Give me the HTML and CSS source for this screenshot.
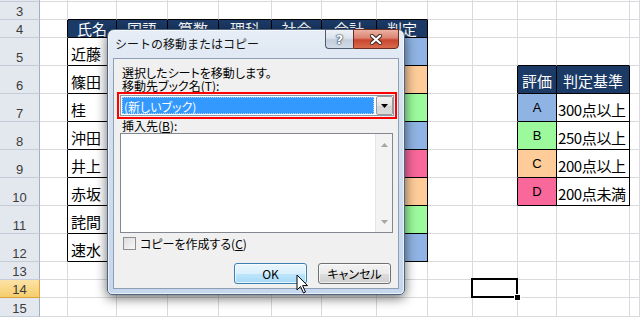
FILE: index.html
```html
<!DOCTYPE html>
<html lang="ja">
<head>
    <meta charset="UTF-8">
    <title>シートの移動またはコピー</title>

    <link rel="stylesheet" href="styles.css">
</head>
<body>

    <div class="screen">

        <div class="sheet">
            <!-- row 2 (only its bottom edge shows) -->
            <div class="rh"></div><div class="c"></div><div class="c"></div><div class="c"></div><div class="c"></div><div class="c"></div><div class="c"></div><div class="c"></div><div class="c"></div><div class="c"></div><div class="c"></div><div class="c"></div><div class="c"></div><div class="c"></div>
            <!-- row 3 -->
            <div class="rh">3</div><div class="c"></div><div class="c tt"></div><div class="c tt"></div><div class="c tt"></div><div class="c tt"></div><div class="c tt"></div><div class="c tt"></div><div class="c tt"></div><div class="c"></div><div class="c"></div><div class="c"></div><div class="c"></div><div class="c"></div>
            <!-- row 4 -->
            <div class="rh">4</div><div class="c tl"></div><div class="c t hd">氏名</div><div class="c t hd">国語</div><div class="c t hd">算数</div><div class="c t hd">理科</div><div class="c t hd">社会</div><div class="c t hd">合計</div><div class="c t hd">判定</div><div class="c"></div><div class="c"></div><div class="c"></div><div class="c"></div><div class="c"></div>
            <!-- row 5 -->
            <div class="rh">5</div><div class="c tl"></div><div class="c t nm">近藤</div><div class="c t"></div><div class="c t"></div><div class="c t"></div><div class="c t"></div><div class="c t"></div><div class="c t blue"></div><div class="c"></div><div class="c"></div><div class="c tt"></div><div class="c tt"></div><div class="c"></div>
            <!-- row 6 -->
            <div class="rh">6</div><div class="c tl"></div><div class="c t nm">篠田</div><div class="c t"></div><div class="c t"></div><div class="c t"></div><div class="c t"></div><div class="c t"></div><div class="c t peach"></div><div class="c"></div><div class="c tl"></div><div class="c t hd big">評価</div><div class="c t hd big">判定基準</div><div class="c"></div>
            <!-- row 7 -->
            <div class="rh">7</div><div class="c tl"></div><div class="c t nm">桂</div><div class="c t"></div><div class="c t"></div><div class="c t"></div><div class="c t"></div><div class="c t"></div><div class="c t green"></div><div class="c"></div><div class="c tl"></div><div class="c t grade blue">A</div><div class="c t nm rule">300点以上</div><div class="c"></div>
            <!-- row 8 -->
            <div class="rh">8</div><div class="c tl"></div><div class="c t nm">沖田</div><div class="c t"></div><div class="c t"></div><div class="c t"></div><div class="c t"></div><div class="c t"></div><div class="c t blue"></div><div class="c"></div><div class="c tl"></div><div class="c t grade green">B</div><div class="c t nm rule">250点以上</div><div class="c"></div>
            <!-- row 9 -->
            <div class="rh">9</div><div class="c tl"></div><div class="c t nm">井上</div><div class="c t"></div><div class="c t"></div><div class="c t"></div><div class="c t"></div><div class="c t"></div><div class="c t pink"></div><div class="c"></div><div class="c tl"></div><div class="c t grade peach">C</div><div class="c t nm rule">200点以上</div><div class="c"></div>
            <!-- row 10 -->
            <div class="rh">10</div><div class="c tl"></div><div class="c t nm">赤坂</div><div class="c t"></div><div class="c t"></div><div class="c t"></div><div class="c t"></div><div class="c t"></div><div class="c t peach"></div><div class="c"></div><div class="c tl"></div><div class="c t grade pink">D</div><div class="c t nm rule">200点未満</div><div class="c"></div>
            <!-- row 11 -->
            <div class="rh">11</div><div class="c tl"></div><div class="c t nm">詫間</div><div class="c t"></div><div class="c t"></div><div class="c t"></div><div class="c t"></div><div class="c t"></div><div class="c t green"></div><div class="c"></div><div class="c"></div><div class="c"></div><div class="c"></div><div class="c"></div>
            <!-- row 12 -->
            <div class="rh">12</div><div class="c tl"></div><div class="c t nm">速水</div><div class="c t"></div><div class="c t"></div><div class="c t"></div><div class="c t"></div><div class="c t"></div><div class="c t blue"></div><div class="c"></div><div class="c"></div><div class="c"></div><div class="c"></div><div class="c"></div>
            <!-- row 13 -->
            <div class="rh">13</div><div class="c"></div><div class="c"></div><div class="c"></div><div class="c"></div><div class="c"></div><div class="c"></div><div class="c"></div><div class="c"></div><div class="c"></div><div class="c"></div><div class="c"></div><div class="c"></div><div class="c"></div>
            <!-- row 14 -->
            <div class="rh sel">14</div><div class="c"></div><div class="c"></div><div class="c"></div><div class="c"></div><div class="c"></div><div class="c"></div><div class="c"></div><div class="c"></div><div class="c"></div><div class="c active"></div><div class="c"></div><div class="c"></div><div class="c"></div>
            <!-- row 15 -->
            <div class="rh">15</div><div class="c"></div><div class="c"></div><div class="c"></div><div class="c"></div><div class="c"></div><div class="c"></div><div class="c"></div><div class="c"></div><div class="c"></div><div class="c"></div><div class="c"></div><div class="c"></div><div class="c"></div>
        </div>

        <div class="dialog">
            <div class="titlebar">
                <span class="title">シートの移動またはコピー</span>
                <div class="caption-btns">
                    <div class="cbtn help">?</div>
                    <div class="cbtn close">
                        <svg width="12" height="11" viewBox="0 0 12 11">
                            <path d="M2 2 L10 9 M10 2 L2 9" stroke="#3a2620" stroke-width="4.2" stroke-linecap="square" fill="none"/>
                            <path d="M2 2 L10 9 M10 2 L2 9" stroke="#fff" stroke-width="2.2" stroke-linecap="square" fill="none"/>
                        </svg>
                    </div>
                </div>
            </div>

            <div class="panel">
                <div class="label">選択したシートを移動します。</div>
                <div class="label">移動先ブック名(<u>T</u>):</div>
                <div class="highlight">
                    <div class="combo">
                        <div class="combo-sel">(新しいブック)</div>
                        <div class="combo-btn">
                            <svg width="7" height="4" viewBox="0 0 7 4"><path d="M0 0 H7 L3.5 4 Z" fill="#000"/></svg>
                        </div>
                    </div>
                </div>
                <div class="label">挿入先(<u>B</u>):</div>
                <div class="listbox">
                    <div class="list-items"></div>
                    <div class="vscroll">
                        <svg width="7" height="4" viewBox="0 0 7 4"><path d="M0 4 H7 L3.5 0 Z" fill="#a6a6a6"/></svg>
                        <svg width="7" height="4" viewBox="0 0 7 4"><path d="M0 0 H7 L3.5 4 Z" fill="#a6a6a6"/></svg>
                    </div>
                </div>
                <div class="check">
                    <span class="box"></span>
                    <span>コピーを作成する(<u>C</u>)</span>
                </div>
                <div class="buttons">
                    <div class="btn default">OK</div>
                    <div class="btn">キャンセル</div>
                </div>
            </div>
        </div>

        <svg class="cursor" width="14" height="21" viewBox="0 0 14 21">
            <path d="M1 1 L1 16 L4.5 12.5 L7.5 19 L9.5 18 L6.6 11.6 L11.5 11.6 Z" fill="#fff" stroke="#000" stroke-width="1" stroke-linejoin="miter"/>
        </svg>

    </div>

</body>
</html>
```

FILE: styles.css
```css
html, body{
    height: 100%;
}

body{
    margin: 0;
    overflow: hidden;
    background: #fff;
    font-family: "Noto Sans CJK JP", "Noto Sans", sans-serif;
}

.screen{
    position: relative;
    width: 640px;
    height: 317px;
}

/* ---------- worksheet ---------- */

.sheet{
    display: grid;
    grid-template-columns: 40px 28px 49px 51px 51px 53px 50px 55px 51px 45px 45px 39px 73px 1fr;
    grid-template-rows: 2px 18px 18px repeat(8, 28px) 18px 18px 19px;
}

.c{
    box-sizing: border-box;
    border-right: 1px solid #d8dadd;
    border-bottom: 1px solid #d8dadd;
    display: flex;
    align-items: flex-end;
    overflow: hidden;
    white-space: nowrap;
    font-size: 15px;
    line-height: 15px;
    color: #000;
}

.rh{
    box-sizing: border-box;
    display: flex;
    align-items: flex-end;
    justify-content: center;
    background: #e3e8ef;
    border-right: 1px solid #9eb0c6;
    border-bottom: 1px solid #c3ccd8;
    font-family: "Liberation Sans", sans-serif;
    font-size: 13px;
    line-height: 15px;
    color: #3b3b3b;
    overflow: hidden;
}

.rh.sel{
    background: linear-gradient(#fbe3a6, #f6cd6c);
    border-right-color: #e0a03a;
    border-bottom-color: #e0a03a;
}

.tt{
    border-bottom-color: #000;
}

.tl{
    border-right-color: #000;
}

.t{
    border-right-color: #000;
    border-bottom-color: #000;
}

.hd{
    background: #1b3a66;
    color: #fff;
    justify-content: center;
    padding-bottom: 1px;
}

.hd.big{
    padding-bottom: 5px;
}

.nm{
    padding: 0 0 4px 3px;
}

.nm.rule{
    padding-left: 1px;
    letter-spacing: -0.4px;
}

.grade{
    justify-content: center;
    font-family: "Liberation Sans", sans-serif;
    font-size: 13px;
    padding-bottom: 6px;
}

.blue{ background: #8fb4e3; }
.green{ background: #9cfa9c; }
.peach{ background: #fdcc99; }
.pink{ background: #f8689b; }

.active{
    position: relative;
    overflow: visible;
}

.active::before{
    content: '';
    position: absolute;
    left: -2px;
    top: -2px;
    right: -1px;
    bottom: -1px;
    border: 2px solid #000;
}

.active::after{
    content: '';
    position: absolute;
    right: -4px;
    bottom: -4px;
    width: 5px;
    height: 5px;
    background: #000;
    border: 1px solid #fff;
}

/* ---------- dialog ---------- */

.dialog{
    position: absolute;
    left: 107px;
    top: 29px;
    width: 298px;
    height: 266px;
    box-sizing: border-box;
    display: flex;
    flex-direction: column;
    border: 1px solid #4f6480;
    border-radius: 7px 7px 5px 5px;
    background: linear-gradient(#e6edf6, #d3e0ef 30%, #c6d8ee);
    box-shadow: inset 0 0 0 1px rgba(255,255,255,0.6), 0 3px 12px rgba(0,0,0,0.6);
}

.titlebar{
    height: 28px;
    display: flex;
    justify-content: space-between;
    align-items: flex-start;
}

.title{
    padding: 6px 0 0 7px;
    font-size: 12px;
    line-height: 16px;
    color: #111;
}

.caption-btns{
    display: flex;
    margin: -1px 5px 0 0;
}

.cbtn{
    height: 20px;
    box-sizing: border-box;
    display: flex;
    align-items: center;
    justify-content: center;
    border: 1px solid #4c5b70;
}

.help{
    width: 28px;
    border-right: none;
    border-radius: 0 0 0 4px;
    background: linear-gradient(#eef2f7 0%, #dbe3ed 45%, #c3cedc 55%, #d2dbe7 100%);
    font-family: "DejaVu Sans", sans-serif;
    font-weight: bold;
    font-size: 13px;
    color: #fff;
    text-shadow: 0 0 1px #2c3a4c, 0 0 1px #2c3a4c, 0 0 2px #2c3a4c;
}

.close{
    width: 46px;
    border-color: #6b2d22;
    border-radius: 0 0 4px 0;
    background: linear-gradient(#eab2a4 0%, #dc8270 45%, #c8462f 55%, #d86a4e 100%);
}

.panel{
    flex: 1;
    margin: 0 5px 5px 5px;
    padding: 7px 1px 0 3px;
    display: flex;
    flex-direction: column;
    background: #f0f0f0;
    border: 1px solid #8e9fb6;
    font-size: 12px;
    line-height: 13px;
    font-feature-settings: "palt";
    color: #000;
}

.label{
    margin-left: 5px;
}

.highlight{
    border: 2px solid #ff0000;
    padding: 1px;
}

.combo{
    display: flex;
    padding: 1px;
    border: 1px solid #8d98a8;
    background: #fff;
}

.combo-sel{
    flex: 1;
    height: 17px;
    box-sizing: border-box;
    margin-right: 2px;
    padding: 2px 0 0 1px;
    background: #3399ff;
    border: 1px dotted #a9d1ff;
    color: #fff;
}

.combo-btn{
    width: 17px;
    height: 19px;
    margin: -1px -1px -1px 0;
    box-sizing: border-box;
    display: flex;
    align-items: center;
    justify-content: center;
    border: 1px solid #9a9a9a;
    border-radius: 2px;
    background: linear-gradient(#f4f4f4, #e4e4e4 50%, #d4d4d4 51%, #dcdcdc);
}

.listbox{
    height: 100px;
    margin: 1px 4px 0 3px;
    box-sizing: border-box;
    display: flex;
    border: 1px solid #828790;
    background: #fff;
}

.list-items{
    flex: 1;
}

.vscroll{
    width: 17px;
    display: flex;
    flex-direction: column;
    justify-content: space-between;
    align-items: center;
    padding: 9px 0 8px;
    box-sizing: border-box;
    background: #f3f3f3;
    border-left: 1px solid #e6e6e6;
}

.check{
    display: flex;
    align-items: center;
    margin: 4px 0 0 6px;
    gap: 4px;
}

.box{
    width: 11px;
    height: 11px;
    border: 1px solid #8f8f8f;
    background: linear-gradient(135deg, #dcdcdc, #f8f8f8);
}

.buttons{
    display: flex;
    justify-content: flex-end;
    gap: 11px;
    margin: 13px 6px 0 0;
}

.btn{
    width: 73px;
    height: 21px;
    box-sizing: border-box;
    display: flex;
    align-items: center;
    justify-content: center;
    border: 1px solid #707070;
    border-radius: 3px;
    background: linear-gradient(#f2f2f2 0%, #ebebeb 50%, #dddddd 51%, #cfcfcf 100%);
    box-shadow: inset 0 0 0 1px rgba(255,255,255,0.7);
    font-size: 12px;
}

.btn.default{
    border-color: #3c7fb1;
    background: linear-gradient(#eaf6fd 0%, #d9f0fc 50%, #bee6fd 51%, #a7d9f5 100%);
}

.cursor{
    position: absolute;
    left: 296px;
    top: 274px;
}
```
